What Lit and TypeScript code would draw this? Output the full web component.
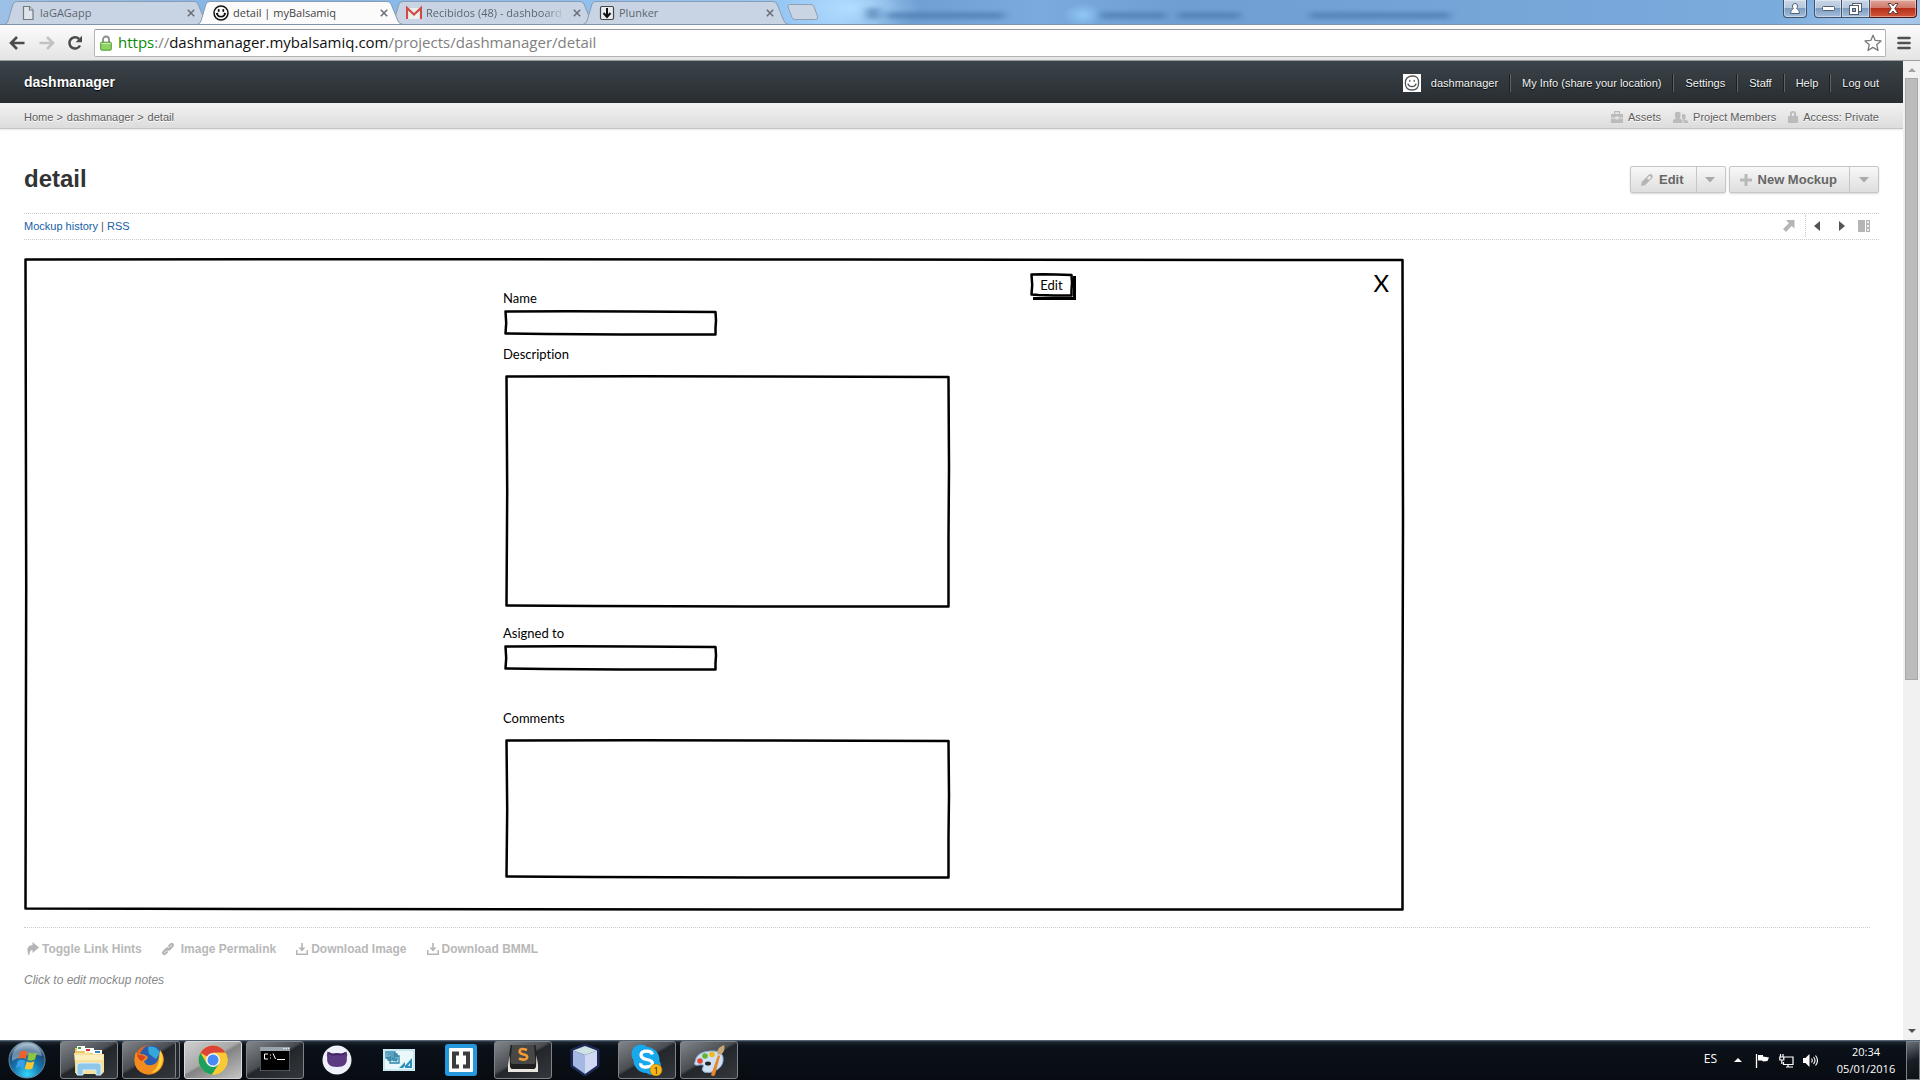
import { LitElement, html, svg, css } from "lit";
import { customElement } from "lit/decorators.js";
import { classMap } from "lit/directives/class-map.js";

/* ---------- tab and toolbar icons ---------- */
const pageIcon = html`<svg class="i16" viewBox="0 0 16 16" fill="#dfe5ec" stroke="#777" stroke-width="1.2"><path d="M3.5 1.5h6l3.5 3.5v9.5h-9.5z"/><path d="M9.5 1.5v3.5h3.500"/></svg>`;
const smileIcon = html`<svg class="i16" viewBox="0 0 16 16" fill="none" stroke="#111" stroke-width="1.5" stroke-linecap="round"><circle cx="8" cy="8" r="7"/><path d="M4 8.800c1 4 7 4 8 0M3.600 8.800l1-.3M12.400 8.800l-1-.3"/><path d="M5.700 4.800v1.200M10.300 4.800v1.200" stroke-width="1.800"/></svg>`;
const gmailIcon = html`<svg class="i16" viewBox="0 0 16 16"><path d="M1 3h14v11H1z" fill="#eee"/><path d="M1 14V3l7 6.500L15 3v11" fill="none" stroke="#cf4b45" stroke-width="2.200"/></svg>`;
const plunkIcon = html`<svg class="i16" viewBox="0 0 16 16"><rect x="1.500" y="1.500" width="13" height="13" rx="1.500" fill="#e8edf2" stroke="#444" stroke-width="1.200"/><path d="M8 3v9M4.500 8L8 12l3.500-4" fill="none" stroke="#111" stroke-width="2"/></svg>`;
const xIcon = html`<svg class="x8" viewBox="0 0 8 8"><path d="M.8.8l6.400 6.400M7.200.8L.8 7.200" stroke="#6b7078" stroke-width="1.600"/></svg>`;
const backIcon = html`<svg width="16" height="14" viewBox="0 0 16 14" fill="none" stroke="#4b4b4b" stroke-width="2.600"><path d="M15.500 7H2.500M8 1L2 7l6 6"/></svg>`;
const fwdIcon = html`<svg width="16" height="14" viewBox="0 0 16 14" fill="none" stroke="#c2c2c2" stroke-width="2.600"><path d="M.5 7h13M8 1l6 6-6 6"/></svg>`;
const reloadIcon = html`<svg width="16" height="16" viewBox="0 0 16 16"><path d="M13 10.500A5.600 5.600 0 1 1 12 4" fill="none" stroke="#4b4b4b" stroke-width="2.500"/><path d="M15 .8v6.400H8.600z" fill="#4b4b4b"/></svg>`;
const padlockIcon = html`<svg width="12" height="16" viewBox="0 0 12 16"><path d="M3 8V4.500a3 3 0 0 1 6 0V8" fill="none" stroke="#8a8f8a" stroke-width="1.800"/><rect x=".7" y="7.200" width="10.600" height="8" rx="1" fill="#8fd266" stroke="#4f9a33"/><path d="M1.500 8.500h9" stroke="#c9efb0"/></svg>`;
const starIcon = html`<svg width="18" height="18" viewBox="0 0 18 18"><path d="M9 1.200l2.200 5.200 5.800.5-4.300 3.800 1.300 5.700L9 13.400l-5 3 1.300-5.700L1 6.900l5.800-.5z" fill="#fff" stroke="#7a7a7a" stroke-width="1.300" stroke-linejoin="round"/></svg>`;
const menuIcon = html`<svg width="14" height="14" viewBox="0 0 14 14"><path d="M1.500 2h11M1.500 7h11M1.500 12h11" stroke="#505050" stroke-width="2.600" stroke-linecap="round"/></svg>`;

/* ---------- site icons ---------- */
const avatarIcon = html`<svg width="18" height="18" viewBox="0 0 18 18"><rect width="18" height="18" fill="#fff"/><g fill="none" stroke="#555" stroke-width="1.300" stroke-linecap="round"><path d="M9 2c5-.3 6.700 2.500 6.600 7 0 4.600-2.300 7-6.600 7S2.300 13.500 2.300 9C2.300 4.500 4.500 2.300 9 2z"/><path d="M5 10c1.200 3.500 6.800 3.500 8 0"/><path d="M6.800 6.500v.8M11.200 6.500v.8"/></g></svg>`;
const caseIcon = html`<svg width="12" height="12" viewBox="0 0 12 12" fill="#bbb"><path d="M3 3V0h6v3h3v3.500H7.500V5.500h-3v1H0V3zM4.200 1.300V3h3.600V1.300z" fill-rule="evenodd"/><path d="M0 7.500h4.500v1h3v-1H12V12H0z"/></svg>`;
const peopleIcon = html`<svg width="15" height="12" viewBox="0 0 15 12" fill="#bbb"><path d="M2 1.500Q5 0 7.500 1.500V6L6.500 7.500l3 1.500V12H0V9l3-1.500L2 6z"/><path d="M9 3.500q2-1 3.500.5v3.500l-.7 1L15 10v2h-4.500V8.500L9 7.500z"/></svg>`;
const lockIcon = html`<svg width="10" height="12" viewBox="0 0 10 12" fill="#bbb"><path d="M0 5h2V2.500Q2 0 5 0t3 2.500V5h2v7H0zM4 5h2V2.500q0-.8-1-.8t-1 .8z" fill-rule="evenodd"/></svg>`;
const pencilIcon = html`<svg width="12" height="12" viewBox="0 0 12 12"><path d="M0 12l.7-4L7.500 1q2-1.800 3.500-.2t0 3.400L4 11.200z" fill="#b5b5b5"/><path d="M6 4.200l2.600-2.500 1.700 1.700-2.500 2.600z" fill="#eee"/></svg>`;
const plusIcon = html`<svg width="12" height="12" viewBox="0 0 12 12"><path d="M4.500 0h3v4.500H12v3H7.500V12h-3V7.500H0v-3h4.500z" fill="#b9b9b9"/></svg>`;
const caretIcon = html`<svg width="10" height="6" viewBox="0 0 10 6"><path d="M0 0h10L5 5.500z" fill="#aaa"/></svg>`;
const expandIcon = html`<svg width="12" height="12" viewBox="0 0 12 12" fill="#b5b5b5"><path d="M3 0h8.500v8.500L8.600 6 3 12 0 9l5.800-5.700z"/></svg>`;
const prevIcon = html`<svg width="6" height="10" viewBox="0 0 6 10"><path d="M6 0v10L0 5z" fill="#555"/></svg>`;
const nextIcon = html`<svg width="6" height="10" viewBox="0 0 6 10"><path d="M0 0v10l6-5z" fill="#555"/></svg>`;
const panelIcon = html`<svg width="12" height="12" viewBox="0 0 12 12" fill="#b5b5b5"><path d="M0 0h7v12H0z"/><path d="M8 0h4v12H8zM9.200 1.200v2h1.600v-2zM9.200 5v2h1.600V5zM9.200 8.800v2h1.600v-2z" fill-rule="evenodd"/></svg>`;
const shareIcon = html`<svg width="12" height="14" viewBox="0 0 12 14"><path d="M5.500 0L12 5.500 5.500 11V8Q2.500 8 2.500 13H1.500Q-2 4 5.500 3z" fill="#b5b5b5"/></svg>`;
const chainIcon = html`<svg width="12" height="14" viewBox="0 0 12 14" fill="none" stroke="#b5b5b5"><path d="M6.500 4.500l2.300-2.300q1-.8 1.800 0t0 1.800L7.500 7.500 6 8M5.500 9.500l-2.300 2.300q-1 .8-1.800 0t0-1.800L4.500 6.500 6 6" stroke-width="2"/><path d="M4.500 9l3.500-4" stroke-width="1.500"/></svg>`;
const downIcon = html`<svg width="12" height="14" viewBox="0 0 12 14" fill="#b5b5b5"><path d="M5.200 1h1.600v4.500h2.700L6 9.500 2.500 5.500h2.700z"/><path d="M0 8h1.500v3.500h9V8H12v5H0z"/></svg>`;

/* ---------- taskbar icons ---------- */
const startOrb = html`<svg width="38" height="38" viewBox="0 0 38 38"><defs><radialGradient id="orb" cx=".5" cy=".9" r=".9"><stop offset="0" stop-color="#35d6fb"/><stop offset=".45" stop-color="#1674ac"/><stop offset=".75" stop-color="#1b4b78"/><stop offset="1" stop-color="#a3bccd"/></radialGradient></defs><circle cx="19" cy="19" r="18" fill="url(#orb)" stroke="#6c8ba0"/><path d="M4 15Q7 3 19 2.500T34 15Q19 11 4 20z" fill="#fff" opacity=".35"/><path d="M12 11q4-2.500 7.500 0l-1.800 7q-4-2-7.500.3z" fill="#f0622a"/><path d="M21 11.500q4 2 8-.3l-2 7.300q-4 2.200-7.700.2z" fill="#8cc63e"/><path d="M9.700 20q4-2.200 7.500-.2l-2 7.200q-3.700-2.200-7.400.2z" fill="#3a9ee8"/><path d="M18.800 20.500q4 2 7.600-.2l-2 7.200q-4 2.200-7.600 0z" fill="#fdc82f"/></svg>`;
const taskIcons: Record<string, unknown> = {
  explorer: svg`<path d="M2 4h10l2 3h15v22H2z" fill="#e9c868"/><path d="M4 2h8v5H4z" fill="#fff"/><path d="M5 3h3v2H5z" fill="#3a3"/><path d="M12 4h9v5h-9z" fill="#fff"/><path d="M13 5h4v2h-4z" fill="#c33"/><path d="M20 6h9v5h-9z" fill="#fff"/><path d="M22 7h5v2h-5z" fill="#38b"/><path d="M1 9h12l2-2 2 3h14v18l-2 2H3z" fill="#f8e09a"/><path d="M2 11h28v5H2z" fill="#fcefbf"/><path d="M4 31v-9q0-3 3-3h18q3 0 3 3v9h-5v-5H10v5z" fill="#8dc8ea" stroke="#d2effd"/>`,
  firefox: svg`<circle cx="16" cy="16" r="14.500" fill="#e8641b"/><circle cx="18" cy="12.500" r="11" fill="#2a5db0"/><path d="M15 3q8-2 12 6l-4 6-7-5z" fill="#35a7d8"/><path d="M3 8q2 3 6 2 4 1 6 3-1 3-4 4 1 5 8 4 6-1 7-9l2-5q6 9-1 18-6 7-15 5Q1 27 1.500 15q0-4 1.500-7z" fill="#f28c1e"/><path d="M27 6q5 8 1 16-3 6-10 7 8-5 8-14z" fill="#ffd23c"/><path d="M4 8q1 4 5 3l4 2-4 4q-5-1-5-9z" fill="#d9431c"/>`,
  chrome: svg`<circle cx="16" cy="16" r="14.500" fill="#fbc934"/><path d="M16 16L3.500 8.700A14.500 14.500 0 0 1 28.600 8.800H16z" fill="#dc4437"/><path d="M3.450 8.750A14.500 14.500 0 0 0 15 30.470L22.300 19.600 9.700 19.600z" fill="#1da160"/><path d="M16 8.800h12.600A14.500 14.500 0 0 1 15 30.460L22.300 19.600z" fill="#fbc934"/><circle cx="16" cy="16" r="7" fill="#f5f5f5"/><circle cx="16" cy="16" r="5.500" fill="#4a8af4"/>`,
  cmd: svg`<path d="M1 3h30v24H1z" fill="#9aa4ad"/><path d="M1.500 7h29v19.500h-29z" fill="#000"/><path d="M24 4.500h1.500M26.500 4.500H28M29 4.500h1" stroke="#e8eef5"/><path d="M9 10H5.500v5H9M11.500 10.500v1M11.500 13.500v1M14 9.500l2.500 5.500M18 15.500h8" fill="none" stroke="#fff"/>`,
  github: svg`<circle cx="16" cy="16" r="14.500" fill="#eef0fa"/><path d="M6.500 7.500l4.500 2q5-1 10 0l4.500-2q1.300 3.500.3 6 1 9.500-9.800 9.500T6.200 13.500Q5.500 10.500 6.500 7.500z" fill="#5b3a82"/><path d="M7.500 9l4 1.700q4.500-1 9 0l4-1.700" fill="none" stroke="#3d2364" stroke-width="1.500"/>`,
  sheet: svg`<path d="M0 5h32v22H0z" fill="#eaf7fb"/><path d="M1 6h30v20H1z" fill="none" stroke="#a6d8e8"/><path d="M3 8h9v6H3zM5 10h9v6H5zM7 12h9v7H7z" fill="#e8f6fb" stroke="#2b83a8" stroke-width="1.300"/><path d="M9 14.500h2v3M13 14v4" stroke="#2b83a8" fill="none"/><path d="M16 24l6-6v6zM20 24l9-10v10zM25 22h2v-3z" fill="#2f8fba" fill-rule="evenodd"/>`,
  brackets: svg`<rect width="32" height="32" rx="3" fill="#2497dd"/><rect x="4" y="4" width="24" height="24" rx="1" fill="#fff"/><path d="M14 9.500H9v13h5M18 9.500h5v13h-5" fill="none" stroke="#3c3c3c" stroke-width="4"/>`,
  sublime: svg`<path d="M1 21L3.500 1h25L31 21v7H1z" fill="#1f1f1f"/><path d="M1 21v7h30v-7l-1.500-10-.5 12-1.500 2h-23L3 23 2.500 11z" fill="#e9e6df"/><path d="M5 1h22l1.500 17q0 2-2 2h-21q-2 0-2-2z" fill="#474747"/><path d="M20 6q-7-2.500-7.500 1.300Q13 10 17 10.500q4 1 3 3.500-1.500 3-8 .5" fill="none" stroke="#f49a35" stroke-width="2.600"/>`,
  cube: svg`<path d="M16 1l13 5v16l-13 9L3 22V6z" fill="#1e2858" stroke="#1e2858" stroke-width="3"/><path d="M16 2l12 4.500L16 11 4 6.500z" fill="#cfe3e4"/><path d="M4 6.500L16 11v19L4 21.500z" fill="#a5b8e4"/><path d="M28 6.500L16 11v19l12-8.500z" fill="#d0d8f2"/>`,
  skype: svg`<circle cx="10" cy="10" r="9.500" fill="#17a9ec"/><circle cx="21" cy="22" r="9" fill="#17a9ec"/><circle cx="15.500" cy="16" r="13" fill="#17a9ec"/><path d="M21.500 10.500q-1-3.300-6-3.300t-5.500 3.600q0 3.700 5.500 4.700 6 1 6 4t-6 3.500-6-3.700" fill="none" stroke="#fff" stroke-width="3.300"/><circle cx="25" cy="26" r="6" fill="#fdb515" stroke="#a66a00" stroke-width=".6"/><text x="25" y="29.500" text-anchor="middle" font-family="Open Sans, sans-serif" font-size="9" fill="#222">1</text>`,
  paint: svg`<path d="M2 18Q3 8 17 7q11-1 13 6 1 8-5 12-7 5-14 3-3-2-1-5t-4-2-4-3z" fill="#cfe2f4" stroke="#8aa9cc"/><circle cx="7" cy="17" r="2.800" fill="#e0493a"/><circle cx="12" cy="12" r="2.800" fill="#62b52f"/><circle cx="19" cy="10.500" r="2.800" fill="#f3b81c"/><ellipse cx="15" cy="19.500" rx="3" ry="2" fill="#23252b"/><path d="M18 31l7-20 2 1-5 19q-2 2-4 0z" fill="#e8862c"/><path d="M24.500 10Q23 4 31 1q2 6-3.500 10z" fill="#c9a774"/>`,
};

interface Task { name: string; icon: string; state: string; }
const tasks: Task[] = [
  { name: "Explorer", icon: "explorer", state: "open" },
  { name: "Firefox", icon: "firefox", state: "open stack" },
  { name: "Chrome", icon: "chrome", state: "open current" },
  { name: "Command Prompt", icon: "cmd", state: "open" },
  { name: "GitHub", icon: "github", state: "" },
  { name: "Sheets", icon: "sheet", state: "" },
  { name: "Brackets", icon: "brackets", state: "" },
  { name: "Sublime Text", icon: "sublime", state: "open" },
  { name: "VirtualBox", icon: "cube", state: "" },
  { name: "Skype", icon: "skype", state: "open" },
  { name: "Paint", icon: "paint", state: "open" },
];

const tabs = [
  { title: "laGAGapp", icon: pageIcon, active: false },
  { title: "detail | myBalsamiq", icon: smileIcon, active: true },
  { title: "Recibidos (48) - dashboard", icon: gmailIcon, active: false },
  { title: "Plunker", icon: plunkIcon, active: false },
];

/** Hand-drawn rectangle outline that stretches with its parent. */
const sketch = (w: number, h: number) => {
  const r = w - 1.5, b = h - 1.5;
  return html`<svg class="sketch" viewBox="0 0 ${w} ${h}" preserveAspectRatio="none" aria-hidden="true">
    <path vector-effect="non-scaling-stroke" d="M1.500 1.500 L${w * 0.3} 1.200 L${w * 0.6} 1.500 L${r} 2 L${w - 1} ${h * 0.4} L${r} ${h * 0.7} L${r} ${b} L${w * 0.55} ${b} L${w * 0.2} ${b - 0.500} L1.500 ${b - 1} L2.200 ${h * 0.5} Z"/>
  </svg>`;
};

@customElement("app-root")
export class AppRoot extends LitElement {
  static styles = css`
    :host { display: flex; flex-direction: column; min-height: 100vh; background: #fff; font-family: "Liberation Sans", Arial, sans-serif; font-size: 11px; color: #555; }
    * { box-sizing: border-box; }
    button, input, textarea { font: inherit; color: inherit; margin: 0; padding: 0; border: 0; background: none; }
    a { color: inherit; text-decoration: none; }
    svg { display: block; flex: none; }

    .tabstrip { position: relative; display: flex; align-items: flex-end; height: 24px; padding-left: 4px; font: 12px/16px "Open Sans", sans-serif;
      background: radial-gradient(ellipse 70px 30px at 850px 8px, #b3dcff, transparent), radial-gradient(ellipse 20px 12px at 1083px 15px, #8fc7f3, transparent), radial-gradient(ellipse 120px 40px at 1900px 20px, #a9c9ea, transparent), linear-gradient(90deg, #9dc0e6, #83b5e8 240px, #90c0f0 600px, #98c8f5 840px, #6f9fd2 900px, #7aaade 1040px, #6f9fd2 1180px, #76a5d8 1500px, #7dafe0); }
    .smudges { position: absolute; inset: 9px 0 4px 0; width: 100%; height: 11px; overflow: visible; }
    .tab { position: relative; display: flex; align-items: center; gap: 4px; width: 206px; height: 23px; margin-right: -13px; padding: 0 11px 0 16px; color: #5d6670; z-index: 1; }
    .tab.active { z-index: 3; color: #444; }
    .tab-shape { position: absolute; inset: 0; width: 100%; height: 100%; z-index: -1; fill: #c8d4e3; stroke: #8b9bb0; }
    .tab.active .tab-shape { fill: #fbfbfb; }
    .tab-title { flex: 1; overflow: hidden; white-space: nowrap; font-size: 11px; text-align: left; }
    .fade { -webkit-mask-image: linear-gradient(90deg, #000 85%, transparent); mask-image: linear-gradient(90deg, #000 85%, transparent); }
    .tab-close { display: flex; padding: 4px; }
    .i16 { width: 16px; height: 16px; }
    .x8 { width: 8px; height: 8px; }
    .newtab { align-self: center; margin-left: 11px; z-index: 1; }
    .winbtns { display: flex; align-self: flex-start; margin: 0 3px 0 auto; z-index: 1; }
    .winbtn { display: grid; place-items: center; width: 28px; height: 18px; border: 1px solid #40536b; border-top: 0; border-left: 0; background: linear-gradient(#c8d6e6, #b4c7dc 50%, #7d9dc0 50%, #a5c0dc); box-shadow: inset 0 0 0 1px #ffffff66; }
    .winbtn.user { width: 24px; margin-right: 7px; border-left: 1px solid #40536b; border-radius: 0 0 4px 4px; }
    .winbtn.min { border-left: 1px solid #40536b; border-radius: 0 0 0 4px; }
    .winbtn.close { width: 47px; border-radius: 0 0 4px 0; border-color: #4f1510; background: linear-gradient(#e0a598, #d07a6b 45%, #b6301a 50%, #d0573a); }

    .toolbar { display: flex; align-items: center; gap: 14px; height: 37px; padding: 0 9px 0 9px; background: linear-gradient(#fcfcfc, #e4e4e4); border-top: 1px solid #7f93ad; border-bottom: 1px solid #9c9c9c; }
    .omnibox { flex: 1; display: flex; align-items: center; gap: 6px; height: 28px; margin-left: -3px; margin-right: -3px; padding: 0 3px 0 5px; background: #fff; border: 1px solid #b4b4b4; border-top-color: #999; border-radius: 2px; font: 15px/20px "Open Sans", sans-serif; color: #808080; }
    .url { flex: 1; padding-bottom: 2px; white-space: nowrap; }
    .secure { color: #0b8a0b; }
    .host { color: #111; }
    .toolbar button { display: flex; }
    .toolbar .reload { margin-left: -2px; }

    .viewport { flex: 1; display: flex; }
    .page { flex: 1; min-width: 0; }
    .scroll { display: flex; flex-direction: column; align-items: center; width: 17px; padding: 7px 0; background: #f1f1f1; }
    .thumb { flex: none; width: 13px; height: 602px; margin: 6px 0 auto; background: #bcbcbc; border: 1px solid #a8a8a8; }

    .masthead { display: flex; justify-content: space-between; align-items: center; height: 42px; padding: 0 24px; color: #f4f4f4; background: linear-gradient(#3b444a, #282d31); text-shadow: 0 1px 1px #000; }
    .brand { font-size: 14px; font-weight: bold; color: #fff; line-height: 16px; }
    .nav { display: flex; align-items: center; padding-top: 1px; line-height: 17px; }
    .nav a { padding-top: 1px; }
    .nav a + a { margin-left: 12px; padding-left: 11px; border-left: 1px solid #5c6468; box-shadow: -1px 0 #1c2023; }
    .nav svg { margin-right: 10px; }
    .crumbs { display: flex; justify-content: space-between; align-items: center; height: 26px; padding: 2px 24px 0; background: linear-gradient(#f2f2f2, #dcdcdc); border-bottom: 1px solid #c4c4c4; box-shadow: 0 1px 2px #00000018; text-shadow: 0 1px #fff; color: #5c5c5c; }
    .trail { display: flex; gap: 4px; }
    .side { display: flex; gap: 12px; }
    .side a { display: flex; align-items: center; gap: 5px; }

    .content { padding: 37px 24px 0; }
    .titlebar { display: flex; justify-content: space-between; align-items: center; height: 27px; margin-bottom: 20px; }
    h1 { margin: 0; padding-bottom: 2px; font-size: 24px; line-height: 28px; color: #333; }
    .actions { display: flex; gap: 3px; }
    .split { display: flex; height: 27px; border: 1px solid #c6c6c6; border-radius: 2px; background: linear-gradient(#f8f8f8, #dedede); box-shadow: 0 1px 2px #00000026; font-size: 13px; font-weight: bold; color: #666; text-shadow: 0 1px #fff; }
    .main { display: flex; align-items: center; gap: 6px; padding: 0 12px 0 10px; }
    .more { display: grid; place-items: center; width: 29px; padding-right: 1px; border-left: 1px solid #c6c6c6; }
    .subbar { display: flex; justify-content: space-between; align-items: center; height: 27px; margin-bottom: 18px; padding-bottom: 2px; border: 1px dotted #ccc; border-width: 1px 0; line-height: 14px; }
    .subbar a { color: #1560a8; }
    .view { display: flex; align-items: center; gap: 13px; padding-right: 9px; }
    .view button { display: grid; place-items: center; height: 22px; }
    .pager { display: flex; gap: 19px; margin-left: -3px; padding-left: 8px; border-left: 1px dotted #ccc; }

    .canvas { position: relative; display: flex; align-items: flex-start; max-width: 1380px; padding: 0 15px 32px 479px; font: 13px/16px Lato, sans-serif; font-variant-ligatures: none; color: #000; }
    .sketch { position: absolute; inset: 0; width: 100%; height: 100%; overflow: visible; fill: none; stroke: #000; stroke-width: 2.500px; stroke-linejoin: round; pointer-events: none; }
    .form { display: flex; flex-direction: column; width: 447px; padding-top: 32px; }
    .field { position: relative; display: flex; }
    .field input, .field textarea { width: 100%; height: 100%; padding: 4px 8px; outline: 0; resize: none; }
    .line { width: 213px; height: 26px; margin: 4px 0 10px 1px; }
    .area { width: 445px; margin: 13px 0 17px 2px; }
    .tall { height: 233px; }
    .short { height: 140px; margin-bottom: 0; }
    .spaced { margin-bottom: 39px; }
    .wire-edit { position: relative; width: 43px; height: 24px; margin: 15px 0 0 80px; background: #fff; box-shadow: 3px 3px #000; line-height: 20px; }
    .wire-close { margin: 10px 0 0 auto; font-size: 24px; line-height: 30px; }

    .foot { margin: 16px 9px 0 0; padding-top: 13px; border-top: 1px dotted #ccc; font-size: 12px; line-height: 16px; }
    .links { display: flex; gap: 20px; padding-left: 3px; font-weight: bold; color: #b8b8b8; }
    .links a { display: flex; align-items: center; gap: 3px; }
    .links .wide { gap: 7px; }
    .notes { display: block; margin-top: 15px; font-style: italic; color: #888; }

    .taskbar { display: flex; align-items: center; height: 40px; padding-left: 8px; background: linear-gradient(#66788a, #1b242e 2px, #0b1119 6px, #080c12); color: #fff; font: 11px/17px "Open Sans", sans-serif; }
    .tasks { display: flex; gap: 4px; margin-left: 14px; }
    .task { display: grid; place-items: center; width: 58px; height: 38px; border: 1px solid transparent; border-radius: 3px; }
    .task.open { border-color: #7f8489; background: linear-gradient(150deg, #82868a, #4a4e53 45%, #23272c 50%, #34383d); }
    .task.current { border-color: #dcdcdc; background: linear-gradient(150deg, #cfcfcf, #a9a9a9 45%, #838383 50%, #c4c4c4); }
    .task.stack { width: 54px; margin-right: 4px; box-shadow: 4px 0 0 -1px #24282d, 4px 0 #7f8489; }
    .i32 { width: 32px; height: 32px; }
    .tray { display: flex; align-items: center; margin-left: auto; height: 100%; }
    .status { display: flex; align-items: center; gap: 9px; margin: 0 8px 0 12px; }
    .lang { margin: 0 17px 4px 0; font-size: 12px; }
    .clock { width: 80px; text-align: center; }
    .desk { width: 14px; height: 39px; border: 1px solid #7a828a; background: linear-gradient(160deg, #6a7178, #1a1f25 50%, #0d1116); }
  `;

  private renderTab(t: (typeof tabs)[number]) {
    return html`<div class=${classMap({ tab: true, active: t.active })}>
      <svg class="tab-shape" viewBox="0 0 206 23" preserveAspectRatio="none"><path d="M0 23.500Q3 23 4 20L9 3Q10 .5 13 .5H190Q193 .5 194 3L201 20Q202 23 206 23.500"/></svg>
      ${t.icon}
      <button class=${classMap({ "tab-title": true, fade: t.title.length > 22 })}>${t.title}</button>
      <button class="tab-close" aria-label="Close tab">${xIcon}</button>
    </div>`;
  }

  render() {
    return html`
      <div class="tabstrip">
        <svg class="smudges" aria-hidden="true"><defs><filter id="soft" x="-10%" y="-100%" width="120%" height="300%"><feGaussianBlur stdDeviation="4 2"/></filter></defs>
          <g fill="#4474a8" opacity=".6" filter="url(#soft)"><rect x="866" y="-1" width="14" height="11"/><rect x="886" y="3" width="118" height="7"/><rect x="1100" y="3" width="66" height="7"/><rect x="1178" y="3" width="62" height="7"/><rect x="1310" y="3" width="140" height="7"/></g></svg>
        ${tabs.map((t) => this.renderTab(t))}
        <button class="newtab" aria-label="New tab"><svg width="32" height="16" viewBox="0 0 32 16"><path d="M2.500.5H24q2 0 3 2l3.500 10q.8 3-2 3H8q-2 0-3-2L1 3Q.3.500 2.500.5z" fill="#c9d5e2" stroke="#8f9fb2"/></svg></button>
        <div class="winbtns">
          <button class="winbtn user" aria-label="User"><svg width="10" height="11" viewBox="0 0 10 11"><path d="M5 .5q2.500 0 2.500 2.500 0 1.500-1 2.500 3 .7 3 5h-9q0-4.300 3-5-1-1-1-2.500Q2.500.5 5 .5z" fill="#fff" stroke="#536479"/></svg></button>
          <button class="winbtn min" aria-label="Minimize"><svg width="13" height="6" viewBox="0 0 13 6"><rect x=".5" y=".5" width="12" height="4" rx="1" fill="#fff" stroke="#535d6b"/></svg></button>
          <button class="winbtn" aria-label="Restore"><svg width="13" height="12" viewBox="0 0 13 12" fill="#fff" stroke="#535d6b"><rect x="3.500" y=".5" width="9" height="8"/><rect x=".5" y="2.500" width="9" height="9"/><rect x="3.500" y="5.500" width="3" height="3" fill="#8aa6c4"/></svg></button>
          <button class="winbtn close" aria-label="Close"><svg width="12" height="11" viewBox="0 0 12 11"><path d="M1 .5h3L6 3 8 .5h3L7.800 5.500 11 10.500H8L6 8l-2 2.500H1L4.200 5.500z" fill="#fff" stroke="#5f3f45"/></svg></button>
        </div>
      </div>
      <div class="toolbar">
        <button aria-label="Back">${backIcon}</button>
        <button aria-label="Forward">${fwdIcon}</button>
        <button class="reload" aria-label="Reload">${reloadIcon}</button>
        <div class="omnibox">${padlockIcon}<span class="url"><span class="secure">https</span>://<span class="host">dashmanager.mybalsamiq.com</span>/projects/dashmanager/detail</span><button aria-label="Bookmark">${starIcon}</button></div>
        <button aria-label="Menu">${menuIcon}</button>
      </div>

      <div class="viewport">
        <div class="page">
          <header class="masthead">
            <a class="brand" href="#">dashmanager</a>
            <nav class="nav">${avatarIcon}<a href="#">dashmanager</a><a href="#">My Info (share your location)</a><a href="#">Settings</a><a href="#">Staff</a><a href="#">Help</a><a href="#">Log out</a></nav>
          </header>
          <div class="crumbs">
            <nav class="trail"><span><a href="#">Home</a> &gt;</span><span><a href="#">dashmanager</a> &gt;</span><span>detail</span></nav>
            <nav class="side"><a href="#">${caseIcon}Assets</a><a href="#">${peopleIcon}Project Members</a><a href="#">${lockIcon}Access: Private</a></nav>
          </div>
          <main class="content">
            <div class="titlebar">
              <h1>detail</h1>
              <div class="actions">
                <div class="split"><button class="main">${pencilIcon}Edit</button><button class="more" aria-label="More edit options">${caretIcon}</button></div>
                <div class="split"><button class="main">${plusIcon}New Mockup</button><button class="more" aria-label="More mockup options">${caretIcon}</button></div>
              </div>
            </div>
            <div class="subbar">
              <span><a href="#">Mockup history</a> | <a href="#">RSS</a></span>
              <div class="view">
                <button aria-label="Full screen">${expandIcon}</button>
                <div class="pager"><button aria-label="Previous">${prevIcon}</button><button aria-label="Next">${nextIcon}</button></div>
                <button aria-label="Panel">${panelIcon}</button>
              </div>
            </div>
            <section class="canvas">
              ${sketch(1380, 653)}
              <div class="form">
                <label for="name">Name</label>
                <div class="field line">${sketch(213, 26)}<input id="name" type="text"></div>
                <label for="description">Description</label>
                <div class="field area tall">${sketch(445, 233)}<textarea id="description"></textarea></div>
                <label for="assigned">Asigned to</label>
                <div class="field line spaced">${sketch(213, 26)}<input id="assigned" type="text"></div>
                <label for="comments">Comments</label>
                <div class="field area short">${sketch(445, 140)}<textarea id="comments"></textarea></div>
              </div>
              <button class="wire-edit">${sketch(43, 24)}Edit</button>
              <button class="wire-close">X</button>
            </section>
            <footer class="foot">
              <nav class="links"><a href="#">${shareIcon}Toggle Link Hints</a><a class="wide" href="#">${chainIcon}Image Permalink</a><a href="#">${downIcon}Download Image</a><a href="#">${downIcon}Download BMML</a></nav>
              <button class="notes">Click to edit mockup notes</button>
            </footer>
          </main>
        </div>
        <div class="scroll"><svg width="8" height="4" viewBox="0 0 8 4"><path d="M4 0l4 4H0z" fill="#a3a3a3"/></svg><div class="thumb"></div><svg width="8" height="4" viewBox="0 0 8 4"><path d="M4 4l4-4H0z" fill="#505050"/></svg></div>
      </div>

      <div class="taskbar">
        <button aria-label="Start">${startOrb}</button>
        <div class="tasks">${tasks.map((t) => html`<button class="task ${t.state}" aria-label=${t.name}><svg class="i32" viewBox="0 0 32 32">${taskIcons[t.icon]}</svg></button>`)}</div>
        <div class="tray">
          <span class="lang">ES</span>
          <svg width="8" height="4" viewBox="0 0 8 4"><path d="M4 0l4 4H0z" fill="#fff"/></svg>
          <div class="status">
            <svg width="16" height="15" viewBox="0 0 16 15"><path d="M2.500 1v14" stroke="#fff" stroke-width="1.300"/><path d="M4 2h5v1.500l6 1L13.500 8 9 8.500 8 7.500H4z" fill="#fff"/></svg>
            <svg width="15" height="15" viewBox="0 0 15 15" fill="none" stroke="#fff" stroke-width="1.200"><path d="M5 4h9v7.500H4.500V9M7 14h7M9 11.500V14M1.500 1v3M4 1v3M.8 4h4v3h-4zM2.800 7v4"/></svg>
            <svg width="15" height="15" viewBox="0 0 15 15"><path d="M0 5h2.500L6.500 1v13l-4-4H0z" fill="#fff"/><path d="M8.500 5.500q1.500 2 0 4M10.500 4q3 3.500 0 7M12.500 2.500q4 5 0 10" fill="none" stroke="#fff" stroke-width="1.100"/></svg>
          </div>
          <time class="clock">20:34<br>05/01/2016</time>
          <button class="desk" aria-label="Show desktop"></button>
        </div>
      </div>
    `;
  }
}
